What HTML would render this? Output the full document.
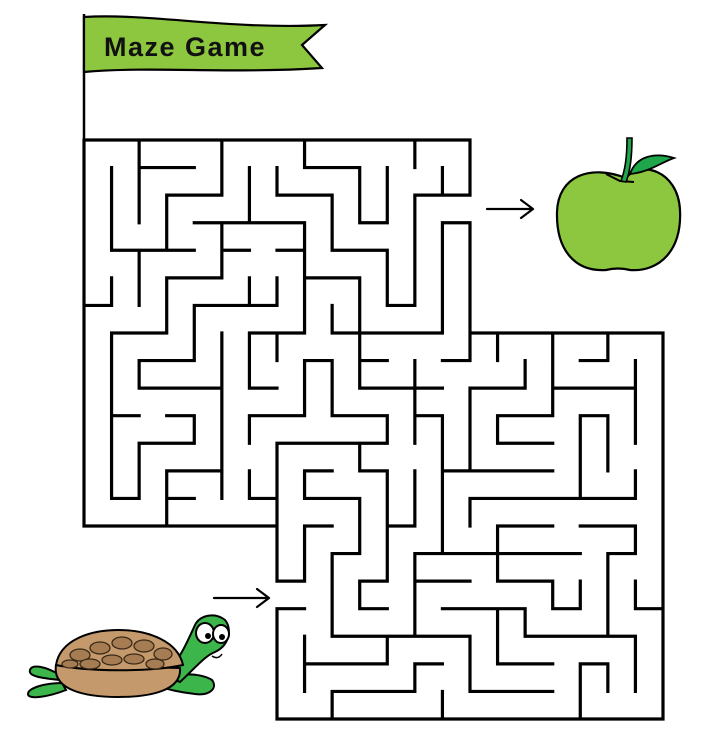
<!DOCTYPE html>
<html><head><meta charset="utf-8"><style>
html,body{margin:0;padding:0;background:#fff;width:705px;height:739px;overflow:hidden}
svg{display:block}
</style></head><body>
<svg width="705" height="739" viewBox="0 0 705 739" xmlns="http://www.w3.org/2000/svg">
<!-- flag -->
<line x1="84" y1="14" x2="84" y2="140" stroke="#000" stroke-width="2.5"/>
<path d="M84,17 C150,13 230,30 325,25 L302,45 L322,68 C230,74 150,66 84,72 Z" fill="#8dc63f" stroke="#000" stroke-width="2.2"/>
<text x="104" y="56" font-family="Liberation Sans, sans-serif" font-weight="bold" font-size="27" fill="#111" letter-spacing="1.5">Maze Game</text>

<!-- maze -->
<g transform="translate(84,140) scale(27.571)" fill="none" stroke="#000" stroke-linecap="square">
<path vector-effect="non-scaling-stroke" stroke-width="3.2" d="
M0,0H14 M2,1H4 M8,1H10 M3,2H5 M7,2H9 M12,2H14 M4,3H8 M10,3H11 M13,3H14
M1,4H4 M5,4H6 M7,4H8 M9,4H11 M3,5H5 M8,5H10 M0,6H1 M4,6H7 M11,6H12
M1,7H3 M6,7H8 M9,7H13 M14,7H21 M2,8H4 M8,8H9 M10,8H11 M13,8H14 M18,8H19
M2,9H5 M6,9H7 M10,9H13 M14,9H16 M17,9H20
M1,10H2 M3,10H4 M6,10H8 M9,10H11 M12,10H13 M15,10H17 M18,10H19
M2,11H4 M7,11H11 M15,11H17 M3,12H5 M8,12H9 M10,12H11 M13,12H17
M1,13H2 M3,13H4 M6,13H7 M8,13H10 M14,13H20
M0,14H7 M8,14H9 M11,14H12 M15,14H17 M18,14H20
M9,15H10 M12,15H18 M19,15H20 M7,16H8 M10,16H11 M12,16H14 M15,16H17
M7,17H8 M10,17H11 M13,17H16 M17,17H18 M20,17H21
M9,18H14 M16,18H20 M8,19H11 M12,19H13 M15,19H17 M18,19H19
M9,20H12 M14,20H17 M7,21H21
M0,0V14 M1,1V4 M1,5V6 M1,7V13 M2,0V3 M2,4V6 M2,8V9 M2,11V13
M3,2V4 M3,5V7 M3,12V14 M4,6V8 M4,10V11 M5,0V2 M5,3V5 M5,7V13
M6,1V3 M6,5V6 M6,7V9 M6,10V11 M6,12V13
M7,1V2 M7,5V6 M7,7V8 M7,11V16 M7,17V21
M8,0V1 M8,3V7 M8,8V10 M8,12V13 M8,14V16 M8,18V20
M9,2V4 M9,6V7 M9,8V10 M9,15V18 M9,20V21
M10,1V3 M10,5V9 M10,11V12 M10,13V15 M10,16V17
M11,1V3 M11,4V6 M11,10V11 M11,12V16 M11,18V19
M12,0V1 M12,2V6 M12,8V11 M12,12V14 M12,15V18 M12,19V20
M13,1V2 M13,3V7 M13,10V15 M13,20V21
M14,0V2 M14,3V8 M14,9V12 M14,13V14 M14,18V20
M15,7V8 M15,10V11 M15,14V16 M15,17V19 M16,8V9 M16,17V18
M17,7V10 M17,16V17 M18,10V13 M18,16V17 M18,19V21
M19,7V8 M19,10V12 M19,15V18 M19,19V20
M20,8V11 M20,12V13 M20,14V15 M20,16V17 M20,18V20 M21,7V21"/>
</g>

<!-- arrows -->
<g stroke="#000" stroke-width="2.2" fill="none" stroke-linecap="round" stroke-linejoin="round">
<path d="M487,209H532 M521,200L533,209L521,218"/>
<path d="M214,598H268 M257,589L269,598L257,607"/>
</g>

<!-- apple -->
<path d="M626,178 C640,160 678,170 680,210 C682,250 660,272 630,270 C622,268 614,268 606,270 C575,272 556,250 557,212 C558,176 590,164 626,178 Z" fill="#8dc63f" stroke="#000" stroke-width="2.2"/>
<path d="M606,174 L620,181 L634,182" stroke="#000" stroke-width="2" fill="none"/>
<path d="M621,181 C625,170 627,158 627,138 L632,138 C632,158 630,172 626,182 Z" fill="#1fa64a" stroke="#000" stroke-width="1.6"/>
<path d="M630,174 C636,156 655,152 674,158 C662,162 650,172 630,174 Z" fill="#1fa64a" stroke="#000" stroke-width="1.8"/>

<!-- turtle -->
<g stroke="#000" stroke-width="2">
<path d="M60,675 C45,666 32,664 30,670 C28,676 40,678 60,680 Z" fill="#3cb54a"/>
<path d="M62,683 C45,683 28,688 28,694 C28,700 48,697 66,690 Z" fill="#3cb54a"/>
<path d="M160,683 C170,672 200,672 212,680 C218,688 210,696 195,694 C180,692 168,690 160,686 Z" fill="#3cb54a"/>
<path d="M165,675 C180,660 188,640 195,625 C200,615 215,612 225,620 C232,628 230,645 215,652 C205,656 198,665 180,682 Z" fill="#3cb54a"/>
<path d="M56,665 C52,690 85,697 118,697 C152,697 182,690 180,668 Z" fill="#c49a6c"/>
<path d="M56,665 C60,640 90,630 118,630 C150,630 178,642 183,665 C150,672 90,672 56,665 Z" fill="#c49a6c"/>
<ellipse cx="205" cy="633" rx="9" ry="10" fill="#fff"/>
<ellipse cx="221" cy="634" rx="8" ry="9" fill="#fff"/>
</g>
<g fill="#a67c52" stroke="#3a2a1a" stroke-width="1.3">
<ellipse cx="80" cy="655" rx="10" ry="6"/><ellipse cx="100" cy="648" rx="10" ry="6"/><ellipse cx="122" cy="643" rx="10" ry="6"/><ellipse cx="144" cy="646" rx="10" ry="6"/><ellipse cx="163" cy="654" rx="9" ry="6"/>
<ellipse cx="90" cy="664" rx="10" ry="5"/><ellipse cx="112" cy="660" rx="10" ry="5"/><ellipse cx="134" cy="659" rx="10" ry="5"/><ellipse cx="155" cy="664" rx="9" ry="5"/><ellipse cx="70" cy="664" rx="8" ry="4"/>
</g>
<circle cx="208" cy="636" r="3" fill="#000"/><circle cx="222" cy="637" r="3" fill="#000"/>
<path d="M212,656 Q218,660 222,654" stroke="#000" stroke-width="1.5" fill="#fff"/>
</svg>
</body></html>
